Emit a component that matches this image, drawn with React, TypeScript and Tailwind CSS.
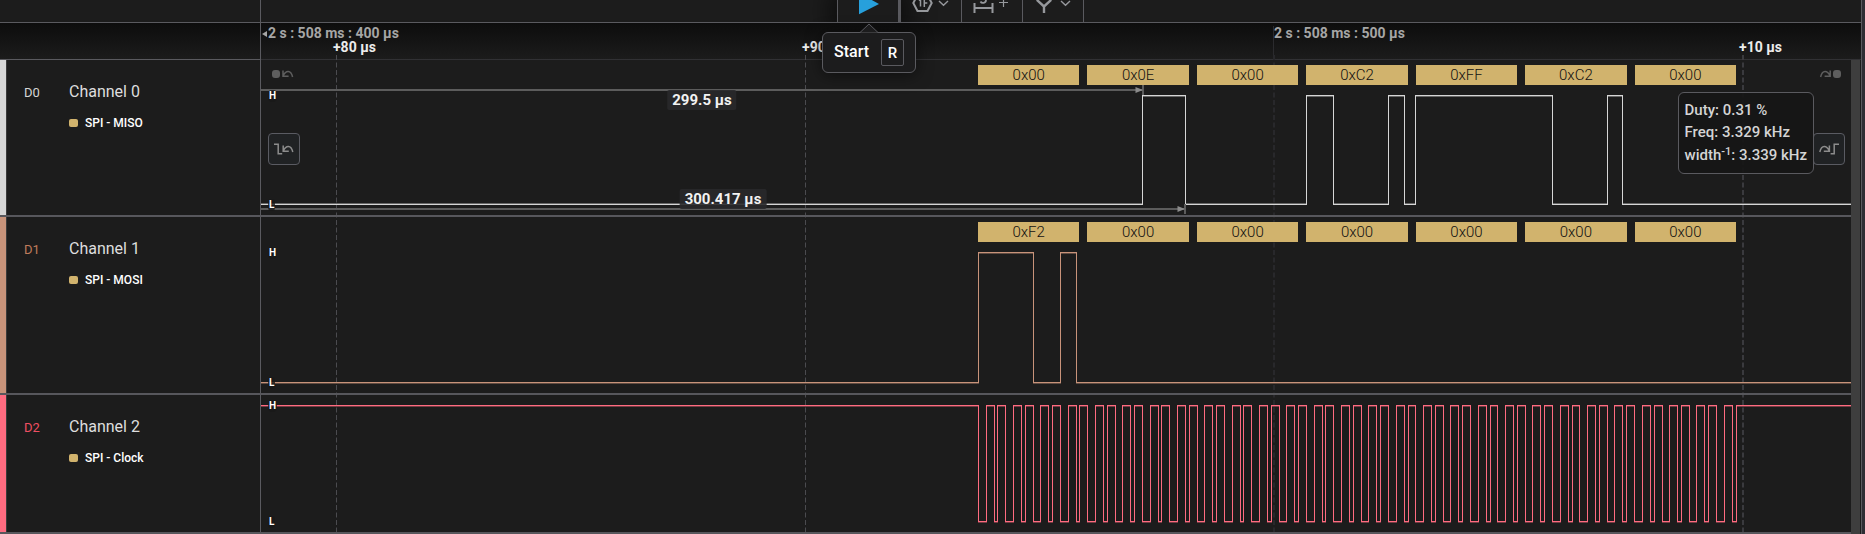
import React from "react";

const SPAN = 1590;
const pct = (t: number) => `${(t / SPAN) * 100}%`;

type Channel = {
  id: string;
  name: string;
  role: string;
  color: string;
  labelClass: string;
  barClass: string;
  heightClass: string;
  height: number;
  high: number;
  low: number;
  startHigh: boolean;
  edges: number[];
  bytes: string[];
  shadowLow: number;
};

const clockEdges: number[] = [];
for (let k = 0; k < 28; k++) {
  const base = 717.5 + 27.34 * k;
  [0, 7.6, 15.6, 19.4].forEach((o) => clockEdges.push(Math.floor(base + o)));
}

const channels: Channel[] = [
  {
    id: "D0",
    name: "Channel 0",
    role: "SPI - MISO",
    color: "#d6d6d6",
    labelClass: "text-[#d6d6d6]",
    barClass: "bg-[#d6d6d6]",
    heightClass: "h-[157px]",
    height: 157,
    high: 35,
    low: 144,
    startHigh: false,
    edges: [881, 924, 1045, 1072, 1127, 1143, 1154, 1291, 1346, 1361],
    bytes: ["0x00", "0x0E", "0x00", "0xC2", "0xFF", "0xC2", "0x00"],
    shadowLow: -1,
  },
  {
    id: "D1",
    name: "Channel 1",
    role: "SPI - MOSI",
    color: "#c8937a",
    labelClass: "text-[#c07b5b]",
    barClass: "bg-[#c8937a]",
    heightClass: "h-[178px]",
    height: 178,
    high: 35,
    low: 165,
    startHigh: false,
    edges: [717, 772, 799, 815],
    bytes: ["0xF2", "0x00", "0x00", "0x00", "0x00", "0x00", "0x00"],
    shadowLow: 1,
  },
  {
    id: "D2",
    name: "Channel 2",
    role: "SPI - Clock",
    color: "#ff6b80",
    labelClass: "text-[#ee4f62]",
    barClass: "bg-[#ff6b80]",
    heightClass: "h-[139px]",
    height: 139,
    high: 10,
    low: 126,
    startHigh: true,
    edges: clockEdges,
    bytes: [],
    shadowLow: 1,
  },
];

function Waveform({ ch }: { ch: Channel }) {
  let high = ch.startHigh;
  let x = 0;
  let main = `M0 ${(high ? ch.high : ch.low) + 0.5}`;
  let shade = "";
  const run = (to: number) => {
    const y = high ? ch.high + 1 : ch.low + ch.shadowLow;
    shade += `M${x} ${y + 0.5}H${to + 1}`;
  };
  ch.edges.forEach((e) => {
    run(e);
    main += `H${e + 0.5}`;
    high = !high;
    main += `V${(high ? ch.high : ch.low) + 0.5}`;
    x = e;
  });
  run(SPAN);
  main += `H${SPAN}`;
  return (
    <svg
      className="block h-full w-full"
      viewBox={`0 0 ${SPAN} ${ch.height}`}
      preserveAspectRatio="none"
      fill="none"
      stroke={ch.color}
      shapeRendering="crispEdges"
      aria-hidden="true"
    >
      <path d={shade} strokeOpacity={0.4} vectorEffect="non-scaling-stroke" />
      <path d={main} vectorEffect="non-scaling-stroke" />
    </svg>
  );
}

function Level({ y, children }: { y: number; children: string }) {
  return (
    <span
      className="absolute left-[7px] -translate-y-1/2 rounded-sm bg-[#191919]/80 px-px text-[10px] leading-3 font-bold text-white"
      style={{ top: y + 1 }}
    >
      {children}
    </span>
  );
}

function PrevEdge({ dot = false }: { dot?: boolean }) {
  return (
    <svg
      width={dot ? 22 : 20}
      height="12"
      viewBox={dot ? "0 0 22 12" : "0 0 20 12"}
      fill="none"
      stroke="currentColor"
      strokeWidth="1.5"
    >
      {dot ? (
        <rect x="0" y="2" width="8" height="8" rx="3" fill="currentColor" stroke="none" />
      ) : (
        <path d="M0 1.2h4.2v9.6h4" />
      )}
      <path
        transform={dot ? "translate(1.8 0)" : undefined}
        d="M9.2 2.5v5.7h5.6M9.5 7.6C12 2.2 17 1.6 18.8 9"
      />
    </svg>
  );
}

function NextEdge({ dot = false }: { dot?: boolean }) {
  return (
    <svg
      width={dot ? 22 : 20}
      height="12"
      viewBox={dot ? "-2 0 22 12" : "0 0 20 12"}
      fill="none"
      stroke="currentColor"
      strokeWidth="1.5"
    >
      {dot ? (
        <rect x="12" y="2" width="8" height="8" rx="3" fill="currentColor" stroke="none" />
      ) : (
        <path d="M11.6 10.8h3.6V1.2H20" />
      )}
      <path
        transform={dot ? "translate(-1.2 0)" : undefined}
        d="M10.4 2.5v5.7H4.8M10.1 7.6C7.6 2.2 2.6 1.6 .8 9"
      />
    </svg>
  );
}

function Measure({ y, end, from, to }: { y: number; end: number; from: number; to: number }) {
  return (
    <>
      <span className="absolute left-0 h-[2px] bg-[#5c5c5c]" style={{ top: y, width: pct(end) }} />
      <span
        className="absolute w-[2px] bg-[#5c5c5c]"
        style={{ left: pct(end), top: from, height: to - from }}
      />
      <svg
        className="absolute -translate-x-full"
        style={{ left: pct(end + 1), top: y - 2 }}
        width="8"
        height="6"
        viewBox="0 0 8 6"
        fill="#8b8b8b"
        aria-hidden="true"
      >
        <path d="M0.5 0 8 3 0.5 6z" />
      </svg>
    </>
  );
}

function MeasureLabel({ top, center, children }: { top: number; center: number; children: string }) {
  return (
    <span
      className="absolute -translate-x-1/2 rounded-xs bg-[#29292b]/90 px-[5px] text-[15px] leading-5 font-bold text-[#f2f2f2]"
      style={{ top, left: pct(center) }}
    >
      {children}
    </span>
  );
}

function ChannelRow({ ch, children }: { ch: Channel; children?: React.ReactNode }) {
  return (
    <section className={`flex border-b-2 border-[#57575c] ${ch.heightClass}`}>
      <div className="flex w-[261px] shrink-0 border-r border-[#5a5a5f]">
        <div className={`w-[7px] border-r border-[#3a3a3a] ${ch.barClass}`} />
        <div className="flex pt-[22px] pl-[17px]">
          <span className={`w-[45px] pt-px text-[13px] leading-5 ${ch.labelClass}`}>{ch.id}</span>
          <div>
            <h2 className="text-base leading-5 text-[#dedede]">{ch.name}</h2>
            <p className="mt-[11px] flex items-center gap-[7px] text-[12px] leading-5 font-medium text-white">
              <span className="h-2 w-[9px] rounded-xs bg-[#d1b36d]" />
              {ch.role}
            </p>
          </div>
        </div>
      </div>
      <div className="relative min-w-0 flex-1">
        <div className={`absolute inset-x-0 top-0 ${ch.heightClass}`}>
          <Waveform ch={ch} />
        </div>
        {ch.bytes.length > 0 && (
          <div className="relative flex gap-2 pt-[5px] pr-[7.233%] pl-[45.094%]">
            {ch.bytes.map((b, i) => (
              <span
                key={i}
                className="flex-1 bg-[#d1b36d] text-center text-[15px] leading-5 font-light text-[#111111]"
              >
                {b}
              </span>
            ))}
          </div>
        )}
        {children}
        <Level y={ch.high}>H</Level>
        <Level y={ch.low}>L</Level>
      </div>
    </section>
  );
}

function Grid() {
  const lines = [
    { x: 75.5, c: "#4c4c50", w: 1 },
    { x: 544.5, c: "#4c4c50", w: 1 },
    { x: 1013, c: "#28282b", w: 2 },
    { x: 1482, c: "#3a3a3e", w: 2 },
  ];
  return (
    <svg className="absolute top-[55px] right-[10px] left-[261px] h-[479px] w-[calc(100%-271px)]" aria-hidden="true">
      {lines.map((l) => (
        <line
          key={l.x}
          x1={pct(l.x)}
          x2={pct(l.x)}
          y1="0"
          y2="100%"
          stroke={l.c}
          strokeWidth={l.w}
          strokeDasharray="5 2.5"
        />
      ))}
    </svg>
  );
}

function Toolbar() {
  return (
    <div className="flex h-[23px] border-b border-[#5a5a5f]">
      <div className="w-[261px] shrink-0 border-r border-[#5a5a5f]" />
      <div className="flex overflow-hidden pl-[576px] text-[#96989c]">
        <button
          aria-label="Start"
          className="w-16 shrink-0 border-r-[3px] border-l border-[#5a5a5f] shadow-[0_0_24px_8px_rgba(0,0,0,0.55)]"
        >
          <svg width="60" height="22" viewBox="0 0 60 22">
            <path d="M21-7 41 4 21 14.2z" fill="#27a0dc" />
          </svg>
        </button>
        <button aria-label="Trigger" className="w-[61px] shrink-0 border-r border-[#5a5a5f]">
          <svg width="60" height="22" viewBox="0 0 60 22" fill="none" stroke="currentColor">
            <path d="M16.5-5h10l4.2 8-4.2 8h-10l-4.2-8z" strokeWidth="2" />
            <path d="M17.8.4 19.5 -1V6.6M23.3 7V-1h3.5M23.3 3h3" strokeWidth="1.5" />
            <path d="m38 1 4.5 4.3L47 1" strokeWidth="1.4" />
          </svg>
        </button>
        <button aria-label="Add measurement" className="w-[61px] shrink-0 border-r border-[#5a5a5f]">
          <svg width="60" height="22" viewBox="0 0 60 22" fill="none" stroke="currentColor">
            <path d="M12.5 3v10M30.5 3v10M12.5 8h18" strokeWidth="2" />
            <path d="M18.5 1.5c1 2 5.5 2 5.5-1.5" strokeWidth="1.8" />
            <path d="M37 2.5h9M41.5-2v9" strokeWidth="1.2" />
          </svg>
        </button>
        <button aria-label="Add marker" className="w-[61px] shrink-0 border-r border-[#5a5a5f]">
          <svg width="60" height="22" viewBox="0 0 60 22" fill="none" stroke="currentColor">
            <path d="M14.5-4v4.5l6.5 6 6.5-6V-4M21 6v7" strokeWidth="2.4" />
            <path d="m38 1 4.5 4.3L47 1" strokeWidth="1.4" />
          </svg>
        </button>
      </div>
    </div>
  );
}

function TimeAxis() {
  const minor = [
    { t: 72, s: "+80 µs" },
    { t: 541, s: "+90 µs" },
    { t: 1478, s: "+10 µs" },
  ];
  return (
    <div className="flex h-[37px] bg-linear-to-b from-[#0d0d0d] to-[#1c1c1c] text-[14px] leading-[15px] font-bold">
      <div className="w-[261px] shrink-0 border-r border-b border-[#5a5a5f]" />
      <div className="flex-1 border-b border-[#313134] pr-[10px]">
        <div className="relative h-full">
          <span className="absolute top-[3px] left-px flex items-center gap-px text-[#a6a6a6]">
            <svg width="5" height="6" viewBox="0 0 5 6" fill="currentColor" aria-hidden="true">
              <path d="M5 0v6L0 3z" />
            </svg>
            2 s : 508 ms : 400 µs
          </span>
          <span
            className="absolute top-[3px] h-[33px] border-l border-[#2b2b2e] text-[#a6a6a6]"
            style={{ left: pct(1012) }}
          >
            2 s : 508 ms : 500 µs
          </span>
          {minor.map((m) => (
            <span
              key={m.s}
              className="absolute top-[17px] whitespace-nowrap text-[#ececec]"
              style={{ left: pct(m.t) }}
            >
              {m.s}
            </span>
          ))}
        </div>
      </div>
    </div>
  );
}

const edgeButton =
  "absolute top-[73px] flex h-8 w-8 items-center justify-center rounded border border-[#5a5b62] bg-[#202224] text-[#8c8c8c]";

export default function App() {
  return (
    <div className="flex min-h-screen overflow-hidden bg-[#1c1c1c] font-['Roboto',sans-serif]">
      <main className="relative min-w-0 flex-1">
        <Toolbar />
        <TimeAxis />
        <Grid />
        <div className="relative flex">
          <div className="min-w-0 flex-1">
            <ChannelRow ch={channels[0]}>
              <Measure y={29} end={881} from={25} to={35} />
              <Measure y={148} end={923} from={144} to={154} />
              <MeasureLabel top={30} center={441}>
                299.5 µs
              </MeasureLabel>
              <MeasureLabel top={129} center={462}>
                300.417 µs
              </MeasureLabel>
              <button aria-label="Previous packet" className="absolute top-2 left-[11px] text-[#5e5e5e]">
                <PrevEdge dot />
              </button>
              <button aria-label="Next packet" className="absolute top-2 right-[10px] text-[#5e5e5e]">
                <NextEdge dot />
              </button>
              <button aria-label="Previous edge" className={`${edgeButton} left-[7px]`}>
                <PrevEdge />
              </button>
              <button aria-label="Next edge" className={`${edgeButton} right-[6px]`}>
                <NextEdge />
              </button>
              <div
                role="tooltip"
                className="absolute top-8 right-[37px] rounded-md border border-[#5a5a5f] bg-[#161616]/95 px-1.5 py-[6px] text-[15px] leading-[22px] font-medium whitespace-nowrap text-[#d4d4d4]"
              >
                <p>Duty: 0.31 %</p>
                <p>Freq: 3.329 kHz</p>
                <p className="leading-6">
                  width<sup className="text-[11px]">-1</sup>: 3.339 kHz
                </p>
              </div>
            </ChannelRow>
            <ChannelRow ch={channels[1]} />
            <ChannelRow ch={channels[2]} />
          </div>
          <div className="mr-px w-[9px] bg-[#3e3e3e]" />
        </div>
        <div
          role="tooltip"
          className="absolute top-8 left-[822px] flex h-[41px] items-center gap-3 rounded-md border border-[#5a5a5f] bg-[#1c1c1d] px-[11px] text-base leading-5 font-medium text-white shadow-[0_2px_16px_rgba(0,0,0,0.5)]"
        >
          <span className="-mt-0.5">Start</span>
          <kbd className="flex h-[27px] w-[23px] items-center justify-center rounded-xs border border-[#5a5a5f] font-['Roboto',sans-serif] text-[15px]">
            R
          </kbd>
          <svg
            className="absolute -top-[10px] left-[37px]"
            width="18"
            height="11"
            viewBox="0 0 18 11"
            fill="#1c1c1d"
            stroke="#5a5a5f"
            aria-hidden="true"
          >
            <path d="M0 9.5 9 1l9 8.5" />
            <path d="M.8 10.5h16.4" stroke="#1c1c1d" />
          </svg>
        </div>
      </main>
      <div className="w-1 border-l border-[#5a5a5f] bg-[#2e2e34]" />
    </div>
  );
}
